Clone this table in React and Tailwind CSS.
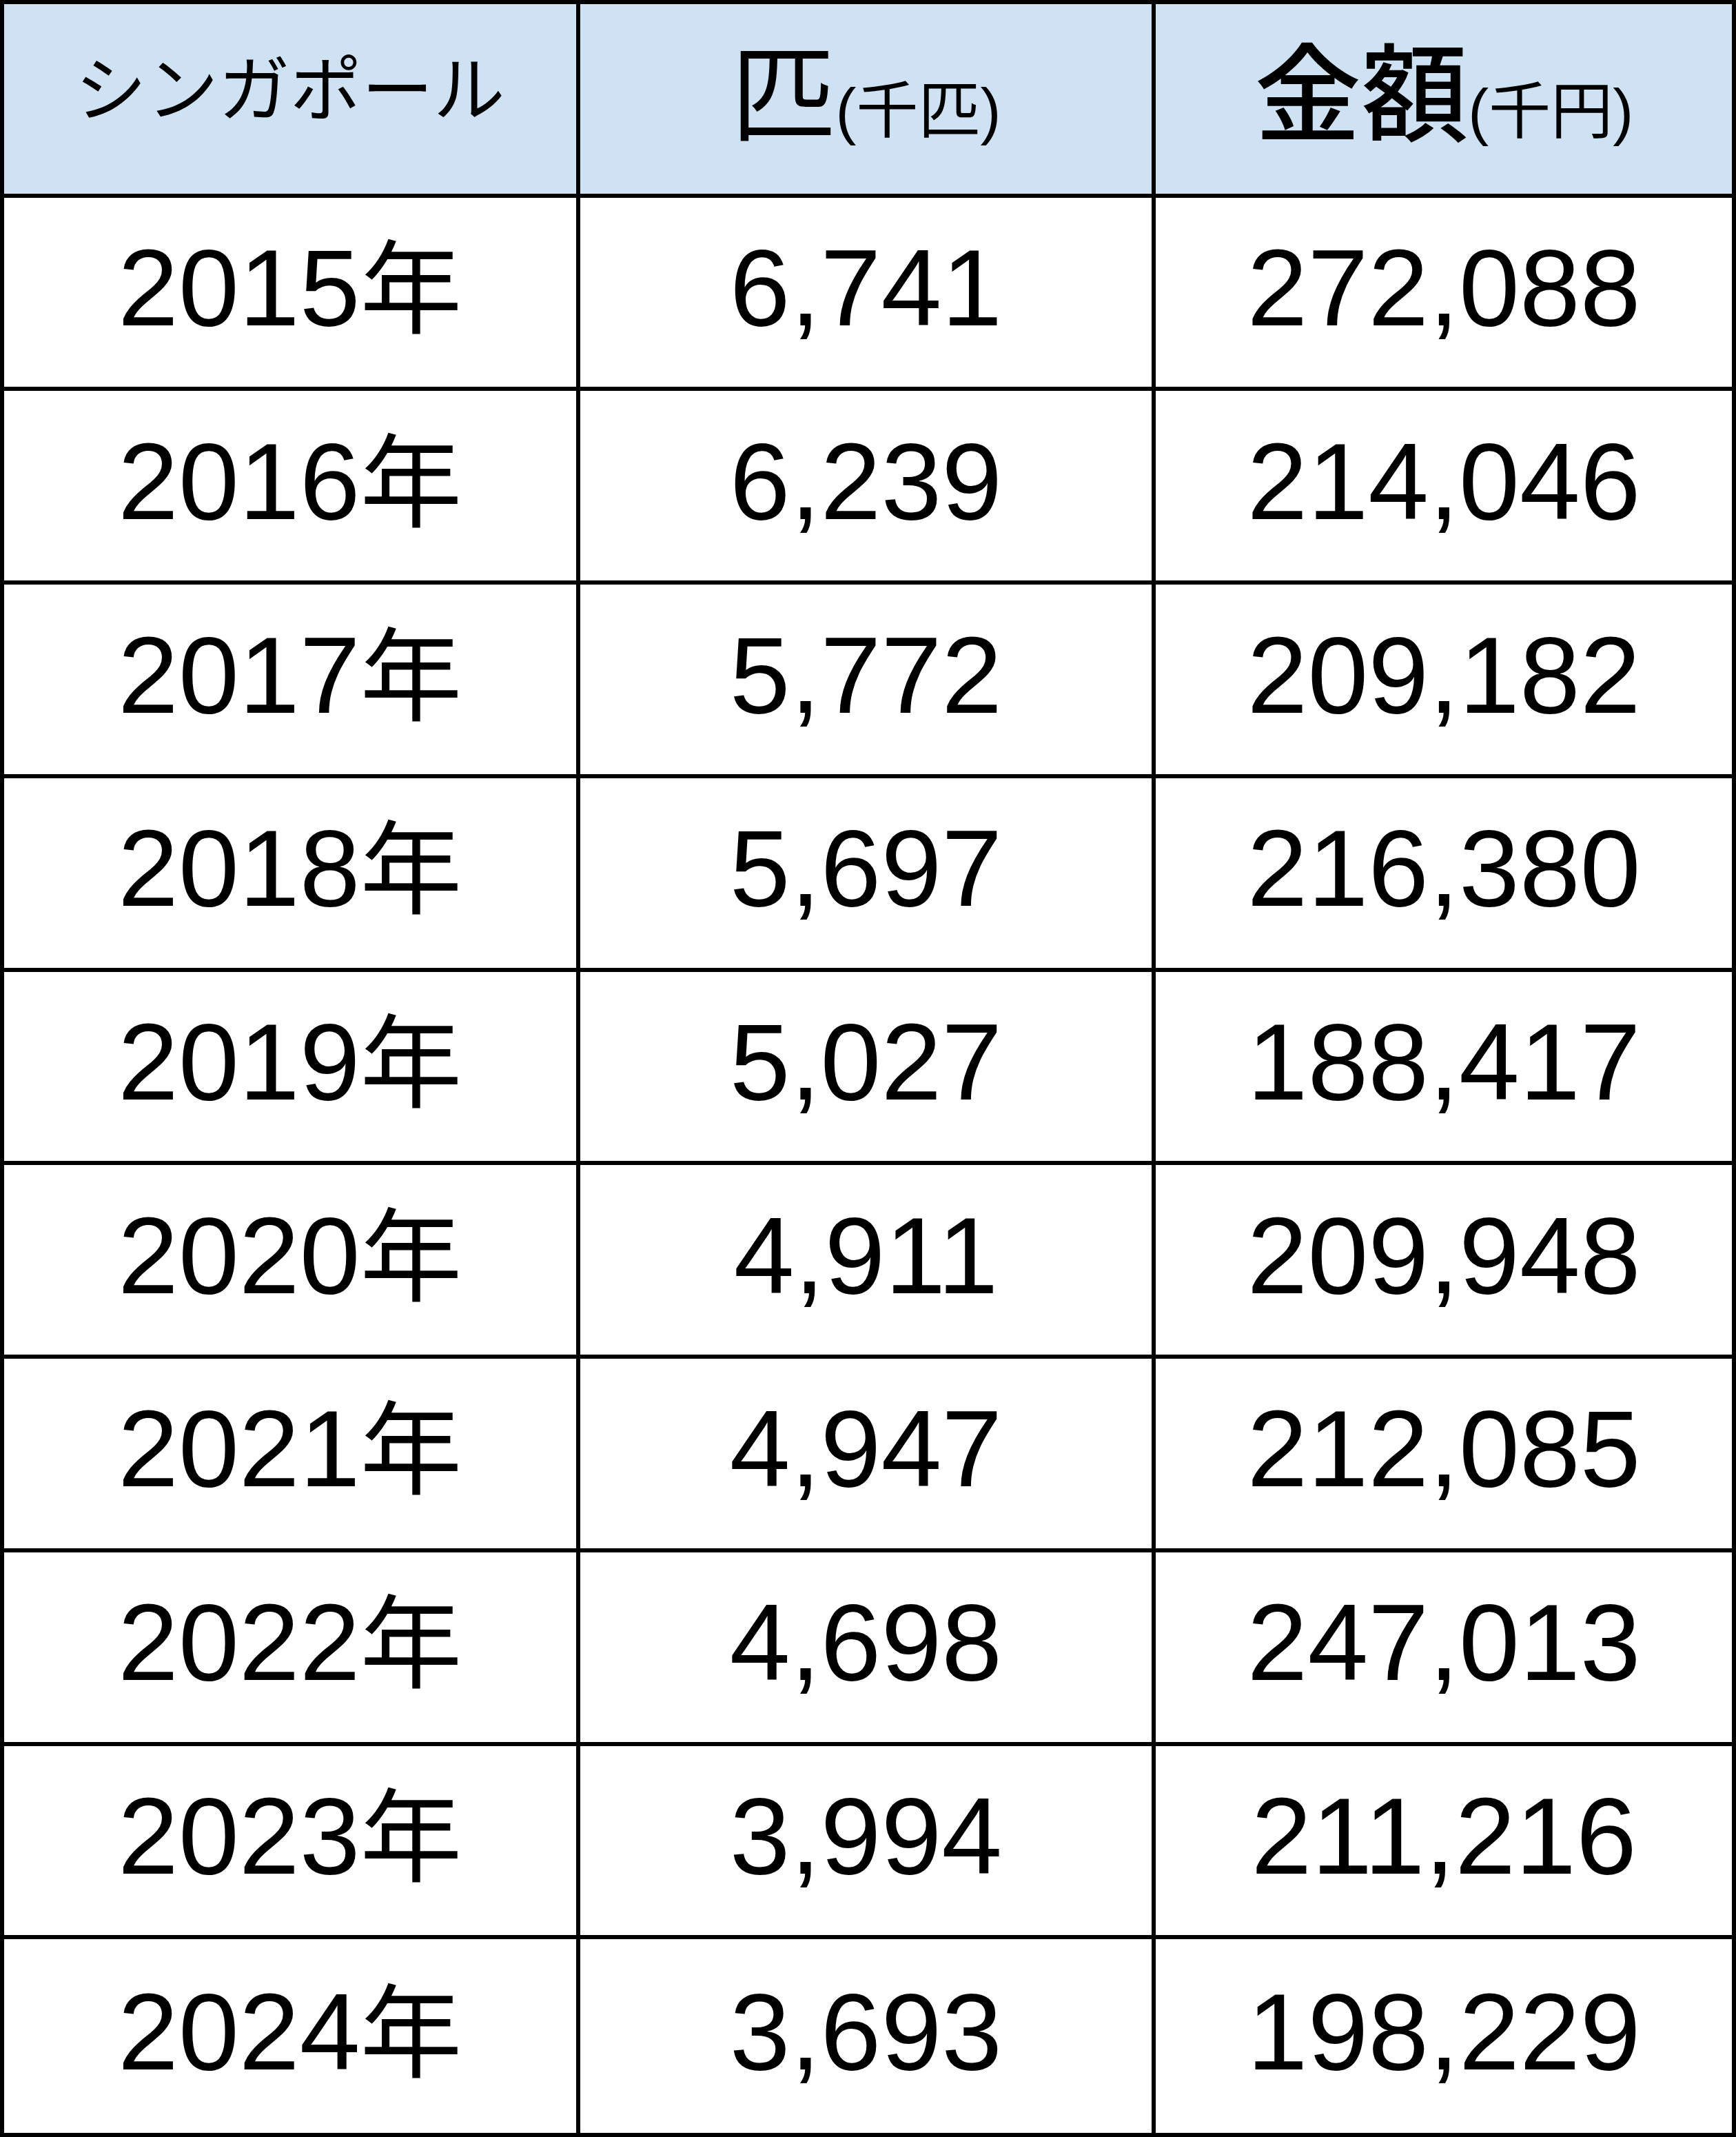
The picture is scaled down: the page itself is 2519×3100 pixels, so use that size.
const rows = [
  ["2015", "6,741", "272,088"],
  ["2016", "6,239", "214,046"],
  ["2017", "5,772", "209,182"],
  ["2018", "5,697", "216,380"],
  ["2019", "5,027", "188,417"],
  ["2020", "4,911", "209,948"],
  ["2021", "4,947", "212,085"],
  ["2022", "4,698", "247,013"],
  ["2023", "3,994", "211,216"],
  ["2024", "3,693", "198,229"],
];

const font = { fontFamily: '"Liberation Sans", "Noto Sans CJK JP", sans-serif' };

export default function App() {
  return (
    <div
      className="box-border grid h-[3100px] w-[2519px] grid-cols-3 grid-rows-[repeat(11,minmax(0,1fr))] border-[6px] border-black bg-white text-black"
      style={font}
    >
      {/* header */}
      <div className="flex items-center justify-center border-r-[6px] border-b-[6px] border-black bg-[#cfe2f3] pb-[22px]">
        <span className="text-[104px] leading-none">シンガポール</span>
      </div>
      <div className="flex items-center justify-center border-r-[6px] border-b-[6px] border-black bg-[#cfe2f3] pb-[8px]">
        <div className="flex items-baseline">
          <span className="text-[152px] leading-none">匹</span>
          <span className="text-[90px] leading-none">(千匹)</span>
        </div>
      </div>
      <div className="flex items-center justify-center border-b-[6px] border-black bg-[#cfe2f3] pb-[8px]">
        <div className="flex items-baseline">
          <span className="text-[155px] font-medium leading-none">金額</span>
          <span className="text-[90px] leading-none">(千円)</span>
        </div>
      </div>

      {rows.map(([year, count, amount], i) => {
        const last = i === rows.length - 1;
        return [
          <div
            key={year + "y"}
            className={`flex items-center justify-center border-r-[6px] border-black pb-[14px] ${last ? "" : "border-b-[6px]"}`}
          >
            <span className="text-[158px] leading-none">
              {year}
              <span className="text-[148px]">年</span>
            </span>
          </div>,
          <div
            key={year + "c"}
            className={`flex items-center justify-center border-r-[6px] border-black pb-[14px] ${last ? "" : "border-b-[6px]"}`}
          >
            <span className="text-[158px] leading-none">{count}</span>
          </div>,
          <div
            key={year + "a"}
            className={`flex items-center justify-center border-black pb-[14px] ${last ? "" : "border-b-[6px]"}`}
          >
            <span className="text-[158px] leading-none">{amount}</span>
          </div>,
        ];
      })}
    </div>
  );
}
